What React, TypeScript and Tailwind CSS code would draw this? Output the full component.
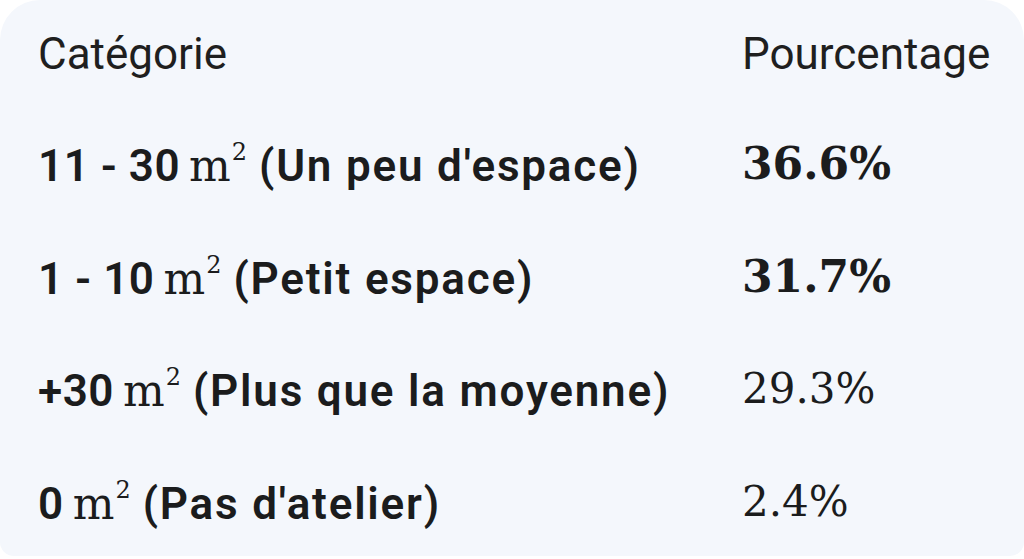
const rows = [
  { range: "11 - 30", label: "(Un peu d'espace)", pct: "36.6%", strong: true },
  { range: "1 - 10", label: "(Petit espace)", pct: "31.7%", strong: true },
  { range: "+30", label: "(Plus que la moyenne)", pct: "29.3%", strong: false },
  { range: "0", label: "(Pas d'atelier)", pct: "2.4%", strong: false },
]

function SquareMeters() {
  return (
    <span className="ml-[9px] mr-[12px] font-['DejaVu_Serif',serif] font-normal tracking-normal">
      <span className="text-[44px]">m</span>
      <span className="ml-[1px] align-[21px] text-[24px]">2</span>
    </span>
  )
}

export default function App() {
  return (
    <div className="h-[559px] w-[1024px] bg-white font-['Roboto',sans-serif] text-[#1b1c1d]">
      <div className="h-[556px] rounded-t-[40px] rounded-b-[14px] bg-[#f4f7fc] pl-[38px]">
        <div className="grid grid-cols-[704px_1fr]">
          <div className="flex h-[108px] items-center text-[44px] leading-none text-[#1f1f1f]">Catégorie</div>
          <div className="flex h-[108px] items-center text-[44px] leading-none text-[#1f1f1f]">Pourcentage</div>
          {rows.map((r) => (
            <>
              <div key={r.range} className="flex h-[112.5px] items-center">
                <span className="whitespace-nowrap text-[44px] leading-none font-semibold">
                  <span className="tracking-[0.5px]">{r.range}</span>
                  <SquareMeters />
                  <span className="tracking-[1.8px]">{r.label}</span>
                </span>
              </div>
              <div
                key={r.pct}
                className={
                  r.strong
                    ? "flex h-[112.5px] items-center font-['DejaVu_Serif',serif] text-[44px] leading-none font-bold"
                    : "flex h-[112.5px] items-center font-['DejaVu_Serif',serif] text-[42px] leading-none font-normal"
                }
              >
                {r.pct}
              </div>
            </>
          ))}
        </div>
      </div>
    </div>
  )
}
